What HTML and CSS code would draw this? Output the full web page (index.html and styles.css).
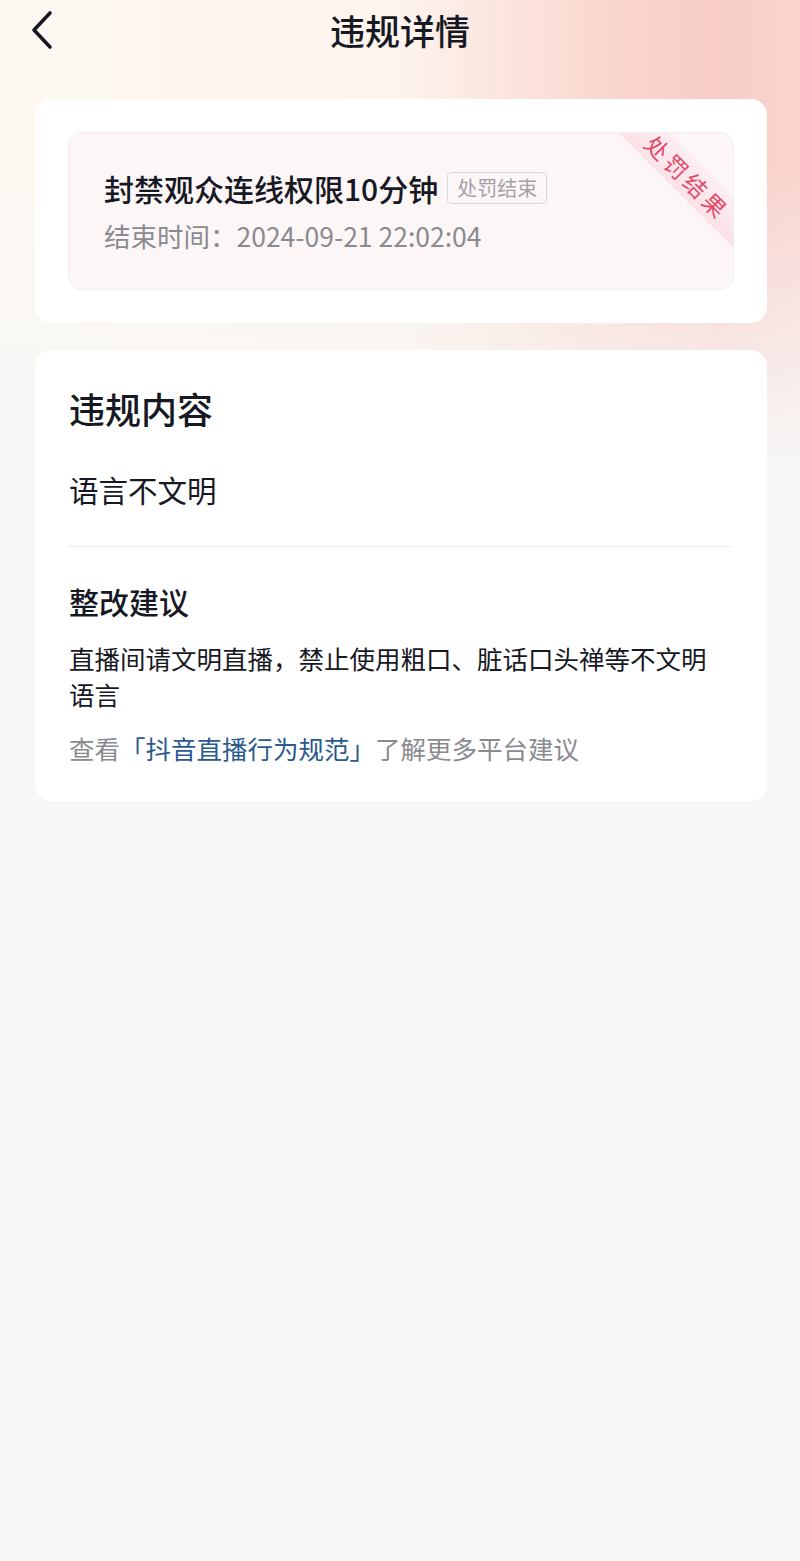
FILE: index.html
```html
<!DOCTYPE html>
<html lang="zh-CN">
<head>
<meta charset="utf-8">
<title>违规详情</title>
<link rel="stylesheet" href="styles.css">
</head>
<body>
<div class="page">
  <header class="nav">
    <span class="back">
      <svg width="30" height="42" viewBox="0 0 30 42"><path d="M22 4 L6 21 L22 38" fill="none" stroke="#161823" stroke-width="3.6" stroke-linecap="round" stroke-linejoin="round"/></svg>
    </span>
    <h1 class="nav-title">违规详情</h1>
  </header>

  <section class="card card-top">
    <div class="penalty">
      <div class="ribbon">处罚结果</div>
      <div class="penalty-title">
        <span class="penalty-name">封禁观众连线权限10分钟</span>
        <span class="tag">处罚结束</span>
      </div>
      <div class="penalty-time">结束时间：2024-09-21 22:02:04</div>
    </div>
  </section>

  <section class="card card-detail">
    <h2 class="sec-title">违规内容</h2>
    <p class="reason">语言不文明</p>
    <div class="divider"></div>
    <h3 class="sub-title">整改建议</h3>
    <p class="advice">直播间请文明直播，禁止使用粗口、脏话口头禅等不文明语言</p>
    <p class="more">查看<span class="link">「抖音直播行为规范」</span>了解更多平台建议</p>
  </section>
</div>
</body>
</html>
```

FILE: styles.css
```css
html, body {
  margin: 0;
  padding: 0;
}
body {
  width: 800px;
  min-height: 1561px;
  background-color: #f7f7f7;
  background-image:
    linear-gradient(to bottom, rgba(247,247,247,0) 0px, rgba(247,247,247,0) 170px, rgba(247,247,247,1) 470px),
    linear-gradient(90deg, #fdf8f2 0%, #fdf4ed 50%, #fbe4dc 64%, #f9d4ce 78%, #f8cdc9 90%, #f9d5cf 100%);
  background-size: 800px 470px, 800px 470px;
  background-repeat: no-repeat;
  font-family: "Noto Sans CJK SC", "Noto Sans", sans-serif;
  color: #161823;
}
.page {
  display: flex;
  flex-direction: column;
  padding: 0 33px 0 35px;
}
.nav {
  height: 99px;
  position: relative;
  display: flex;
  justify-content: center;
}
.back {
  position: absolute;
  left: -7px;
  top: 9px;
  width: 30px;
  height: 42px;
}
.nav-title {
  margin: 0;
  margin-left: -2px;
  font-size: 35px;
  font-weight: 500;
  line-height: 60px;
  color: #161823;
}
.card {
  background: #fff;
  border-radius: 16px;
}
.card-top {
  padding: 33px;
}
.penalty {
  position: relative;
  overflow: hidden;
  background: #fdf6f7;
  border: 1px solid #f6eeee;
  border-radius: 14px;
  padding: 35px 36px 35px 35px;
}
.ribbon {
  position: absolute;
  top: 26px;
  right: -75px;
  width: 240px;
  height: 36px;
  line-height: 36px;
  text-align: center;
  transform: rotate(45deg);
  background: linear-gradient(to bottom, rgba(251,228,233,0.45), #fbe2e7);
  color: #e5476a;
  font-size: 23px;
  letter-spacing: 4px;
}
.penalty-title {
  display: flex;
  align-items: center;
  gap: 9px;
  height: 40px;
}
.penalty-name {
  font-size: 30px;
  font-weight: 500;
  line-height: 40px;
  color: #161823;
}
.tag {
  font-size: 20px;
  line-height: 28px;
  padding: 1px 9px;
  border: 1px solid #d6d6d6;
  border-radius: 4px;
  color: #a2a2a6;
}
.penalty-time {
  margin-top: 10px;
  font-size: 26.5px;
  line-height: 36px;
  color: #8a8b90;
}
.card-detail {
  margin-top: 27px;
  padding: 34px 34px 35px 34px;
  display: flex;
  flex-direction: column;
}
.sec-title {
  margin: 0;
  font-size: 36px;
  font-weight: 500;
  line-height: 48px;
}
.reason {
  margin: 37px 0 0;
  font-size: 29.5px;
  line-height: 40px;
}
.divider {
  margin-top: 37px;
  height: 1px;
  background: #ededed;
}
.sub-title {
  margin: 34px 0 0;
  font-size: 30px;
  font-weight: 500;
  line-height: 40px;
}
.advice {
  margin: 19px 0 0;
  padding-right: 12px;
  font-size: 25.5px;
  line-height: 36px;
  color: #161823;
}
.more {
  margin: 18px 0 0;
  font-size: 25.5px;
  line-height: 36px;
  color: #8a8b90;
}
.link {
  color: #2b5a8f;
}
```
